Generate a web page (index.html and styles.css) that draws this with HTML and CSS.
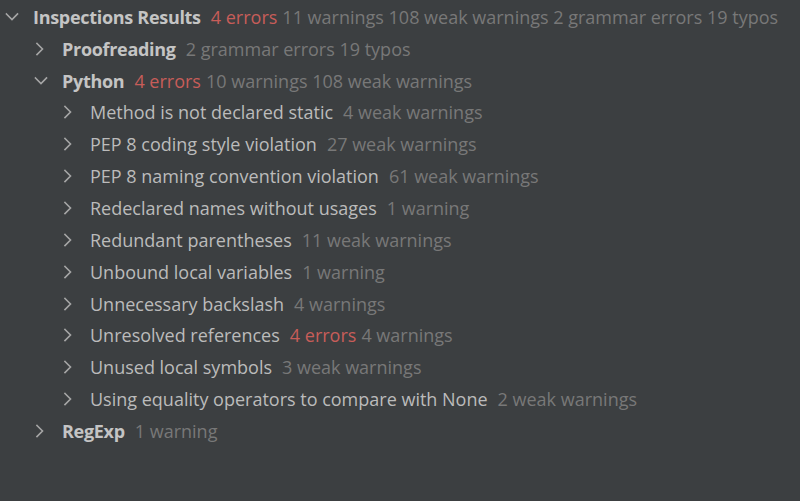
FILE: index.html
```html
<!DOCTYPE html>
<html>
<head>
<meta charset="utf-8">
<link rel="stylesheet" href="styles.css">
</head>
<body>
<div class="tree">
  <div class="row l0"><span class="chev down"><svg width="14" height="10" viewBox="0 0 14 10"><path d="M1.5 2 L7 7.5 L12.5 2" /></svg></span><span class="name bold">Inspections Results</span><span class="err">4 errors</span><span class="meta">11 warnings 108 weak warnings 2 grammar errors 19 typos</span></div>
  <div class="row l1"><span class="chev right"><svg width="10" height="14" viewBox="0 0 10 14"><path d="M2 1.5 L7.5 7 L2 12.5" /></svg></span><span class="name bold">Proofreading</span><span class="meta">2 grammar errors 19 typos</span></div>
  <div class="row l1"><span class="chev down"><svg width="14" height="10" viewBox="0 0 14 10"><path d="M1.5 2 L7 7.5 L12.5 2" /></svg></span><span class="name bold">Python</span><span class="err">4 errors</span><span class="meta">10 warnings 108 weak warnings</span></div>
  <div class="row l2"><span class="chev right"><svg width="10" height="14" viewBox="0 0 10 14"><path d="M2 1.5 L7.5 7 L2 12.5" /></svg></span><span class="name">Method is not declared static</span><span class="meta">4 weak warnings</span></div>
  <div class="row l2"><span class="chev right"><svg width="10" height="14" viewBox="0 0 10 14"><path d="M2 1.5 L7.5 7 L2 12.5" /></svg></span><span class="name">PEP 8 coding style violation</span><span class="meta">27 weak warnings</span></div>
  <div class="row l2"><span class="chev right"><svg width="10" height="14" viewBox="0 0 10 14"><path d="M2 1.5 L7.5 7 L2 12.5" /></svg></span><span class="name">PEP 8 naming convention violation</span><span class="meta">61 weak warnings</span></div>
  <div class="row l2"><span class="chev right"><svg width="10" height="14" viewBox="0 0 10 14"><path d="M2 1.5 L7.5 7 L2 12.5" /></svg></span><span class="name">Redeclared names without usages</span><span class="meta">1 warning</span></div>
  <div class="row l2"><span class="chev right"><svg width="10" height="14" viewBox="0 0 10 14"><path d="M2 1.5 L7.5 7 L2 12.5" /></svg></span><span class="name">Redundant parentheses</span><span class="meta">11 weak warnings</span></div>
  <div class="row l2"><span class="chev right"><svg width="10" height="14" viewBox="0 0 10 14"><path d="M2 1.5 L7.5 7 L2 12.5" /></svg></span><span class="name">Unbound local variables</span><span class="meta">1 warning</span></div>
  <div class="row l2"><span class="chev right"><svg width="10" height="14" viewBox="0 0 10 14"><path d="M2 1.5 L7.5 7 L2 12.5" /></svg></span><span class="name">Unnecessary backslash</span><span class="meta">4 warnings</span></div>
  <div class="row l2"><span class="chev right"><svg width="10" height="14" viewBox="0 0 10 14"><path d="M2 1.5 L7.5 7 L2 12.5" /></svg></span><span class="name">Unresolved references</span><span class="err">4 errors</span><span class="meta">4 warnings</span></div>
  <div class="row l2"><span class="chev right"><svg width="10" height="14" viewBox="0 0 10 14"><path d="M2 1.5 L7.5 7 L2 12.5" /></svg></span><span class="name">Unused local symbols</span><span class="meta">3 weak warnings</span></div>
  <div class="row l2"><span class="chev right"><svg width="10" height="14" viewBox="0 0 10 14"><path d="M2 1.5 L7.5 7 L2 12.5" /></svg></span><span class="name">Using equality operators to compare with None</span><span class="meta">2 weak warnings</span></div>
  <div class="row l1"><span class="chev right"><svg width="10" height="14" viewBox="0 0 10 14"><path d="M2 1.5 L7.5 7 L2 12.5" /></svg></span><span class="name bold">RegExp</span><span class="meta">1 warning</span></div>
</div>
</body>
</html>
```

FILE: styles.css
```css
html, body {
  margin: 0;
  padding: 0;
  background: #3c3f41;
  height: 100%;
  overflow: hidden;
}
.tree {
  padding-top: 1px;
  font-family: "Open Sans", "Noto Sans", sans-serif;
  font-size: 18px;
  color: #bbbbbb;
}
.row {
  display: flex;
  align-items: center;
  height: 31.85px;
  white-space: nowrap;
}
.l0 { padding-left: 5px; }
.l1 { padding-left: 34px; }
.l2 { padding-left: 62px; }
.chev {
  width: 28px;
  display: flex;
  align-items: center;
}
.chev svg path {
  fill: none;
  stroke: #a6a6a6;
  stroke-width: 1.6;
  stroke-linecap: square;
}
.chev.right { padding-left: 1px; width: 27px; }
.name { margin-right: 10px; }
.bold { font-weight: 700; color: #c4c4c4; letter-spacing: -0.3px; }
.err { color: #c75d59; margin-right: 5px; }
.meta { color: #787878; }
```
